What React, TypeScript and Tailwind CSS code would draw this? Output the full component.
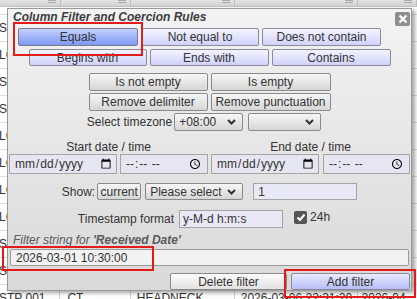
import React from "react";

type V = "sel" | "blue" | "add" | "gray" | "white";

const variants: Record<V, string> = {
  sel: "bg-linear-to-b from-[#c4d0ff] to-[#7f98f2] border-[#7a7a8a]",
  blue: "bg-linear-to-b from-[#f4f4ff] to-[#d0d2fb] border-[#8a8a98]",
  add: "bg-linear-to-b from-[#e8eaff] to-[#b6bdf6] border-[#8a8a98]",
  gray: "bg-linear-to-b from-[#f7f7f7] to-[#d6d6d6] border-[#8a8a8a]",
  white: "bg-linear-to-b from-[#fcfcfc] to-[#e2e2e2] border-[#8a8a8a]",
};

function Btn({
  className,
  variant,
  children,
}: {
  className: string;
  variant: V;
  children: React.ReactNode;
}) {
  return (
    <div
      className={
        "flex items-center justify-center border rounded-[2px] text-[12px] leading-none text-[#333] shrink-0 " +
        variants[variant] +
        " " +
        className
      }
    >
      {children}
    </div>
  );
}

function Chevron() {
  return (
    <svg width="9" height="6" viewBox="0 0 9 6" className="shrink-0">
      <path d="M1 1 L4.5 4.5 L8 1" stroke="#333" strokeWidth="2" fill="none" />
    </svg>
  );
}

function Sel({ className, text }: { className: string; text: string }) {
  return (
    <div
      className={
        "flex items-center justify-between border border-[#8a8a8a] rounded-[2px] bg-linear-to-b from-[#f7f7f7] to-[#d6d6d6] text-[12px] leading-none text-[#333] pl-[4px] pr-[6px] shrink-0 " +
        className
      }
    >
      <span>{text}</span>
      <Chevron />
    </div>
  );
}

const leftCells = [
  "ST",
  "LC",
  "ST",
  "ST",
  "LC",
  "LC",
  "LC",
  "LC",
  "ST",
  "ST",
];

function Row({ cells }: { cells: string[] }) {
  return (
    <div className="flex h-[27px] shrink-0 items-center border-b border-[#dedede] text-[12px] text-[#333]">
      <div className="w-[62px] h-full flex items-center border-r border-[#d4d4d4] -ml-[1px] pl-0">
        {cells[0]}
      </div>
      <div className="w-[71px] h-full flex items-center border-r border-[#d4d4d4] pl-[7px]">
        {cells[1]}
      </div>
      <div className="w-[105px] h-full flex items-center border-r border-[#d4d4d4] pl-[6px]">
        {cells[2]}
      </div>
      <div className="w-[124px] h-full flex items-center border-r border-[#d4d4d4] pl-[6px] whitespace-nowrap overflow-hidden">
        {cells[3]}
      </div>
      <div className="w-[60px] h-full flex items-center pl-[4px] whitespace-nowrap overflow-hidden">
        {cells[4]}
      </div>
    </div>
  );
}

export default function App() {
  return (
    <div className="relative w-[417px] h-[299px] overflow-hidden bg-white font-['Liberation_Sans',Arial,sans-serif]">
      {/* background table */}
      <div className="flex flex-col">
        <div className="flex h-[7px] shrink-0 bg-linear-to-b from-[#e4e4e4] to-[#d2d2d2] border-b border-[#c4c4c4]">
          {[62, 71, 105, 124, 60].map((w, i) => (
            <div
              key={i}
              style={{ width: w }}
              className="h-full border-r border-[#c0c0c0] flex items-start justify-end pr-[4px]"
            >
              <div className="w-[8px] h-[3px] border-b border-t border-[#aaa]" />
            </div>
          ))}
        </div>
        <div className="h-[8px] shrink-0 border-b border-[#dedede]" />
        {leftCells.map((c, i) => (
          <Row key={i} cells={[c, "", "", "", ""]} />
        ))}
        <Row cells={["STP 001", "CT", "HEADNECK", "2026-03-06 22:31:20", "2026-04"]} />
      </div>

      {/* dialog */}
      <div className="absolute left-[7px] top-[8px] w-[405px] h-[283px] border border-[#9a9a9a] bg-linear-to-b from-[#f3f3f3] to-[#d9d9d9] shadow-[3px_2px_4px_rgba(0,0,0,0.35)] flex flex-col">
        <div className="flex items-start justify-between h-[19px] shrink-0 pl-[5px] pr-[1px]">
          <div className="pt-[1px] text-[12px] leading-[14px] font-bold italic text-[#3c3c3c]">
            Column Filter and Coercion Rules
          </div>
          <div className="mt-[3px] w-[15px] h-[14px] rounded-[2px] bg-[#8e8e8e] flex items-center justify-center">
            <svg width="10" height="10" viewBox="0 0 10 10">
              <path d="M1.5 1.5 L8.5 8.5 M8.5 1.5 L1.5 8.5" stroke="#fff" strokeWidth="2.4" />
            </svg>
          </div>
        </div>

        <div className="flex gap-[3px] pl-[10px] h-[18px] shrink-0">
          <Btn variant="sel" className="w-[120px] h-[18px]">Equals</Btn>
          <Btn variant="blue" className="w-[118px] h-[18px]">Not equal to</Btn>
          <Btn variant="blue" className="w-[119px] h-[18px]">Does not contain</Btn>
        </div>
        <div className="flex justify-center gap-[3px] mt-[3px] h-[17px] shrink-0">
          <Btn variant="blue" className="w-[118px] h-[17px]">Begins with</Btn>
          <Btn variant="blue" className="w-[119px] h-[17px]">Ends with</Btn>
          <Btn variant="blue" className="w-[119px] h-[17px]">Contains</Btn>
        </div>

        <div className="flex justify-center gap-[3px] mt-[7px] h-[18px] shrink-0">
          <Btn variant="gray" className="w-[119px] h-[18px]">Is not empty</Btn>
          <Btn variant="gray" className="w-[120px] h-[18px]">Is empty</Btn>
        </div>
        <div className="flex justify-center gap-[3px] mt-[2px] h-[18px] shrink-0">
          <Btn variant="gray" className="w-[119px] h-[18px]">Remove delimiter</Btn>
          <Btn variant="gray" className="w-[120px] h-[18px]">Remove punctuation</Btn>
        </div>

        <div className="flex justify-center items-center mt-[2px] h-[18px] shrink-0 pr-[11px] text-[12px] text-[#333]">
          <span className="mr-[2px]">Select timezone</span>
          <Sel className="w-[69px] h-[18px] mr-[5px]" text="+08:00" />
          <Sel className="w-[73px] h-[18px]" text="" />
        </div>

        <div className="grid grid-cols-2 gap-[3px] px-[1px] mt-[9px] h-[14px] shrink-0 text-[12px] leading-[14px] text-[#333]">
          <div className="text-center">Start date / time</div>
          <div className="text-center">End date / time</div>
        </div>
        <div className="grid grid-cols-2 gap-[3px] px-[1px] h-[20px] shrink-0">
          <div className="flex gap-[3px]">
            <input
              type="date"
              className="w-[108px] h-[20px] border border-[#a4a4a4] bg-[#e6e6f2] text-[12px] text-[#333] pl-[4px] pr-[2px]"
            />
            <input
              type="time"
              className="flex-1 min-w-0 h-[20px] border border-[#a4a4a4] bg-[#e6e6f2] text-[12px] text-[#333] pl-[4px] pr-[2px]"
            />
          </div>
          <div className="flex gap-[4px]">
            <input
              type="date"
              className="w-[108px] h-[20px] border border-[#a4a4a4] bg-[#e6e6f2] text-[12px] text-[#333] pl-[4px] pr-[2px]"
            />
            <input
              type="time"
              className="flex-1 min-w-0 h-[20px] border border-[#a4a4a4] bg-[#e6e6f2] text-[12px] text-[#333] pl-[4px] pr-[2px]"
            />
          </div>
        </div>

        <div className="flex justify-center items-center mt-[9px] h-[17px] shrink-0 text-[12px] text-[#333]">
          <span className="mr-[2px]">Show:</span>
          <Btn variant="gray" className="w-[44px] h-[17px] mr-[4px]">current</Btn>
          <Sel className="w-[98px] h-[17px] mr-[10px]" text="Please select" />
          <div className="w-[104px] h-[17px] border border-[#a4a4a4] bg-[#e8e8f6] flex items-center pl-[4px] leading-none">
            1
          </div>
        </div>

        <div className="flex justify-center items-center mt-[10px] h-[18px] shrink-0 pr-[11px] text-[12px] text-[#333]">
          <span className="mr-[5px]">Timestamp format</span>
          <div className="w-[104px] h-[18px] border border-[#a4a4a4] bg-[#e8e8f6] flex items-center pl-[3px] leading-none mr-[11px]">
            y-M-d h:m:s
          </div>
          <div className="w-[13px] h-[13px] rounded-[2px] bg-[#555] flex items-center justify-center mr-[3px] -mt-[3px]">
            <svg width="10" height="9" viewBox="0 0 10 9">
              <path d="M1.5 4.5 L4 7 L8.5 1.5" stroke="#fff" strokeWidth="2" fill="none" />
            </svg>
          </div>
          <span className="-mt-[5px]">24h</span>
        </div>

        <div className="mt-[5px] pl-[5px] h-[14px] shrink-0 text-[12px] leading-[14px] italic text-[#5a5a5a]">
          Filter string for <span className="font-bold">'Received Date'</span>
        </div>
        <div className="mt-[2px] mx-[2px] h-[17px] shrink-0 border border-[#9a9a9a] rounded-[2px] bg-[#f2f2f2] flex items-center pl-[5px] text-[12px] leading-none text-[#333]">
          2026-03-01 10:30:00
        </div>

        <div className="flex justify-end gap-[4px] mt-[7px] pr-[1px] h-[17px] shrink-0">
          <Btn variant="white" className="w-[117px] h-[17px]">Delete filter</Btn>
          <Btn variant="add" className="w-[119px] h-[17px]">Add filter</Btn>
        </div>
      </div>

      {/* annotation boxes */}
      <div className="absolute left-[13px] top-[22px] w-[130px] h-[34px] border-2 border-[#e21b1b]" />
      <div className="absolute left-[2px] top-[246px] w-[152px] h-[25px] border-2 border-[#e21b1b]" />
      <div className="absolute left-[284px] top-[269px] w-[132px] h-[29px] border-2 border-[#e21b1b]" />
    </div>
  );
}
